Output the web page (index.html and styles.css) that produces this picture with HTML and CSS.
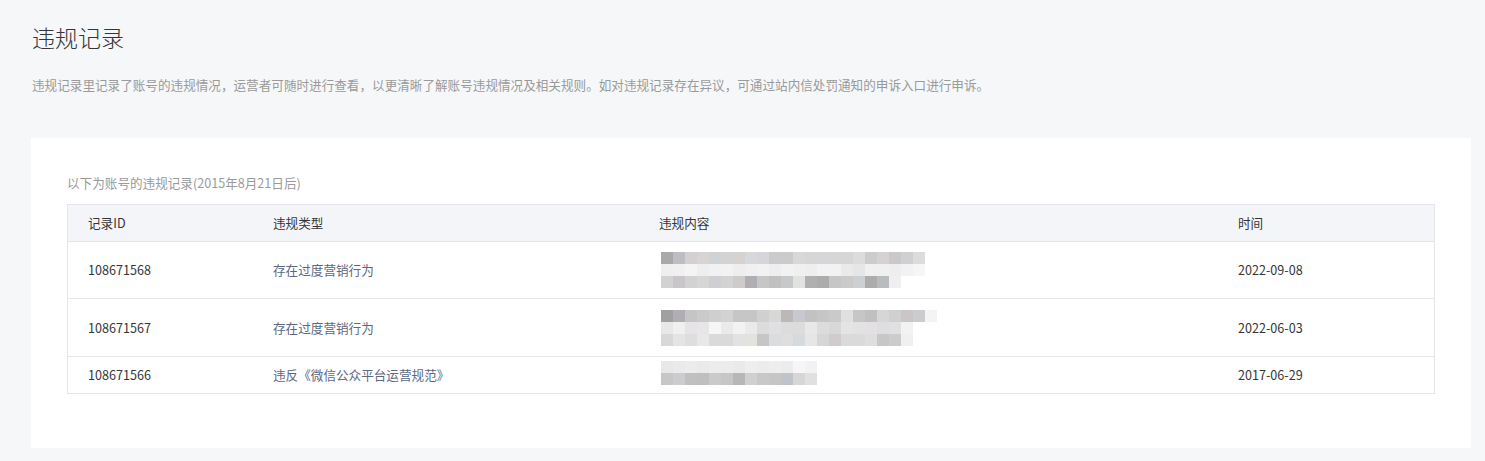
FILE: index.html
```html
<!DOCTYPE html>
<html lang="zh-CN">
<head>
<meta charset="utf-8">
<title>违规记录</title>
<link rel="stylesheet" href="styles.css">
</head>
<body>
<div class="page">
  <h1 class="title">违规记录</h1>
  <p class="desc">违规记录里记录了账号的违规情况，运营者可随时进行查看，以更清晰了解账号违规情况及相关规则。如对违规记录存在异议，可通过站内信处罚通知的申诉入口进行申诉。</p>
  <div class="card">
    <div class="label">以下为账号的违规记录(2015年8月21日后)</div>
    <div class="table">
      <div class="row head">
        <div class="cell">记录ID</div>
        <div class="cell">违规类型</div>
        <div class="cell">违规内容</div>
        <div class="cell">时间</div>
      </div>
      <div class="row">
        <div class="cell id">108671568</div>
        <div class="cell type">存在过度营销行为</div>
        <div class="cell content tall">
          <div class="mosaic">
            <div class="line"><span style="background:#a9a9a9"></span><span style="background:#bebdc1"></span><span style="background:#d3d0d2"></span><span style="background:#d8d4d4"></span><span style="background:#cfd3d6"></span><span style="background:#d3d2d4"></span><span style="background:#d6d2d0"></span><span style="background:#d6d8dc"></span><span style="background:#d8d5d8"></span><span style="background:#cbcacd"></span><span style="background:#cbcbcd"></span><span style="background:#d8d8d8"></span><span style="background:#d6d6d6"></span><span style="background:#d6d6d8"></span><span style="background:#d6d6d8"></span><span style="background:#d6d6d6"></span><span style="background:#dcdcdc"></span><span style="background:#cccccc"></span><span style="background:#d6d2d2"></span><span style="background:#cbc8cb"></span><span style="background:#cfd0d2"></span><span style="background:#dcdcdc"></span></div>
            <div class="line"><span style="background:#efefef"></span><span style="background:#f0f0f0"></span><span style="background:#f4f4f4"></span><span style="background:#eeeeee"></span><span style="background:#f0f2f2"></span><span style="background:#f2f2f2"></span><span style="background:#eeeeee"></span><span style="background:#f0f0f0"></span><span style="background:#f2f2f2"></span><span style="background:#eeeeee"></span><span style="background:#f2f2f2"></span><span style="background:#f0f0f0"></span><span style="background:#eeeeee"></span><span style="background:#f2f2f2"></span><span style="background:#f2f2f2"></span><span style="background:#eaeaea"></span><span style="background:#e6e6e6"></span><span style="background:#f0f0f0"></span><span style="background:#f0f0f0"></span><span style="background:#eeeeee"></span><span style="background:#f2f2f2"></span><span style="background:#f6f6f6"></span></div>
            <div class="line"><span style="background:#d2d2d2"></span><span style="background:#c8c6c8"></span><span style="background:#d2d2d2"></span><span style="background:#d6d6d6"></span><span style="background:#cfcfd3"></span><span style="background:#d3d3d3"></span><span style="background:#cfcbcb"></span><span style="background:#b0aeb4"></span><span style="background:#c6c6c6"></span><span style="background:#c0c0c0"></span><span style="background:#c6c8ca"></span><span style="background:#e2e2e0"></span><span style="background:#b0b0b0"></span><span style="background:#acacac"></span><span style="background:#c6c6c6"></span><span style="background:#cacaca"></span><span style="background:#cdd0d2"></span><span style="background:#acacac"></span><span style="background:#b8bcbe"></span><span style="background:#f0eef0"></span></div>
          </div>
        </div>
        <div class="cell">2022-09-08</div>
      </div>
      <div class="row">
        <div class="cell id">108671567</div>
        <div class="cell type">存在过度营销行为</div>
        <div class="cell content tall">
          <div class="mosaic">
            <div class="line"><span style="background:#a0a0a0"></span><span style="background:#b0aeb4"></span><span style="background:#c6c4c6"></span><span style="background:#cacaca"></span><span style="background:#cfcfcf"></span><span style="background:#d3d3d3"></span><span style="background:#c6c6c6"></span><span style="background:#c6c6c6"></span><span style="background:#d0d0d0"></span><span style="background:#d8d8d6"></span><span style="background:#bcb8b8"></span><span style="background:#c8c8d0"></span><span style="background:#c2c2c2"></span><span style="background:#c6c6c6"></span><span style="background:#c8cacc"></span><span style="background:#e0e0e0"></span><span style="background:#c6c6c6"></span><span style="background:#c0c0c0"></span><span style="background:#d6d6d8"></span><span style="background:#d0d0d0"></span><span style="background:#cac6c6"></span><span style="background:#cccccf"></span><span style="background:#f4f4f6"></span></div>
            <div class="line"><span style="background:#e8e8e8"></span><span style="background:#f0f0f0"></span><span style="background:#e6e4e6"></span><span style="background:#e6e6e8"></span><span style="background:#f6f6f6"></span><span style="background:#eaeaea"></span><span style="background:#f2f2f2"></span><span style="background:#eaeaea"></span><span style="background:#dcdcdc"></span><span style="background:#e0e0e2"></span><span style="background:#dcdcdc"></span><span style="background:#dcdcdc"></span><span style="background:#e8e8e8"></span><span style="background:#dcdcdc"></span><span style="background:#d8d8d8"></span><span style="background:#e4e4e4"></span><span style="background:#e2e2e2"></span><span style="background:#e2e0e2"></span><span style="background:#dedede"></span><span style="background:#e0e0e2"></span><span style="background:#f2f2f2"></span></div>
            <div class="line"><span style="background:#d8d8d8"></span><span style="background:#e4e4e4"></span><span style="background:#e0dedc"></span><span style="background:#e8e8e8"></span><span style="background:#dadada"></span><span style="background:#dadada"></span><span style="background:#e2e2e2"></span><span style="background:#e2e2de"></span><span style="background:#c6c6c6"></span><span style="background:#dadcde"></span><span style="background:#dedede"></span><span style="background:#d6dadc"></span><span style="background:#e6e6e6"></span><span style="background:#d6d6d6"></span><span style="background:#d0cccc"></span><span style="background:#dadada"></span><span style="background:#dadada"></span><span style="background:#dedede"></span><span style="background:#c8c6c8"></span><span style="background:#cccccc"></span><span style="background:#f0f0f0"></span></div>
          </div>
        </div>
        <div class="cell">2022-06-03</div>
      </div>
      <div class="row">
        <div class="cell id">108671566</div>
        <div class="cell type">违反《微信公众平台运营规范》</div>
        <div class="cell content short">
          <div class="mosaic">
            <div class="line"><span style="background:#e8e8e8"></span><span style="background:#eaeaea"></span><span style="background:#ececec"></span><span style="background:#eaeaea"></span><span style="background:#ececec"></span><span style="background:#ececec"></span><span style="background:#eaeaea"></span><span style="background:#eeeeee"></span><span style="background:#ececec"></span><span style="background:#eeeeee"></span><span style="background:#ececec"></span><span style="background:#f6f6f8"></span><span style="background:#f2f2f2"></span></div>
            <div class="line"><span style="background:#c8c6c8"></span><span style="background:#cccccf"></span><span style="background:#c0c0c0"></span><span style="background:#c0bec0"></span><span style="background:#cacaca"></span><span style="background:#c6c6c6"></span><span style="background:#b8b6b8"></span><span style="background:#d0d0d0"></span><span style="background:#c8c8c8"></span><span style="background:#c6c6c6"></span><span style="background:#c0c4c8"></span><span style="background:#d6d6d6"></span><span style="background:#e0e0e0"></span></div>
          </div>
        </div>
        <div class="cell">2017-06-29</div>
      </div>
    </div>
  </div>
</div>
</body>
</html>
```

FILE: styles.css
```css
html, body {
  margin: 0;
  padding: 0;
  background: #f6f7f9;
}

body {
  font-family: "Microsoft YaHei", "Noto Sans CJK SC", "Noto Sans", sans-serif;
  color: #353535;
}

.page {
  width: 1440px;
  padding: 21px 0 13px 31px;
}

.title {
  margin: 0;
  font-size: 23px;
  line-height: 32px;
  font-weight: 300;
  color: #353535;
  padding-left: 1px;
}

.desc {
  margin: 23px 0 0 1px;
  font-size: 12.6px;
  line-height: 18px;
  color: #9a9a9a;
}

.card {
  margin-top: 44px;
  background: #fff;
  padding: 36px 36px 54px 36px;
}

.label {
  font-size: 12.6px;
  line-height: 18px;
  color: #9a9a9a;
  margin-bottom: 12px;
}

.table {
  border: 1px solid #e4e6eb;
  font-size: 12.6px;
}

.row {
  display: grid;
  grid-template-columns: 185px 386px 579px 1fr;
  align-items: center;
  border-top: 1px solid #e4e6eb;
}

.row.head {
  border-top: none;
  background: #f4f5f9;
  height: 36px;
  color: #353535;
}

.cell {
  padding: 0 20px;
  line-height: 18px;
}

.id {
  color: #353535;
}

.type {
  color: #5a6882;
}

.content.tall {
  padding-top: 10px;
  padding-bottom: 10px;
}

.row:nth-child(3) .content.tall {
  padding-top: 11px;
}

.content.short {
  padding-top: 4px;
  padding-bottom: 8px;
}

.mosaic {
  display: flex;
  flex-direction: column;
  margin-left: 2px;
}

.line {
  display: flex;
  height: 12px;
}

.line span {
  width: 12px;
  height: 12px;
  flex: none;
}
```
